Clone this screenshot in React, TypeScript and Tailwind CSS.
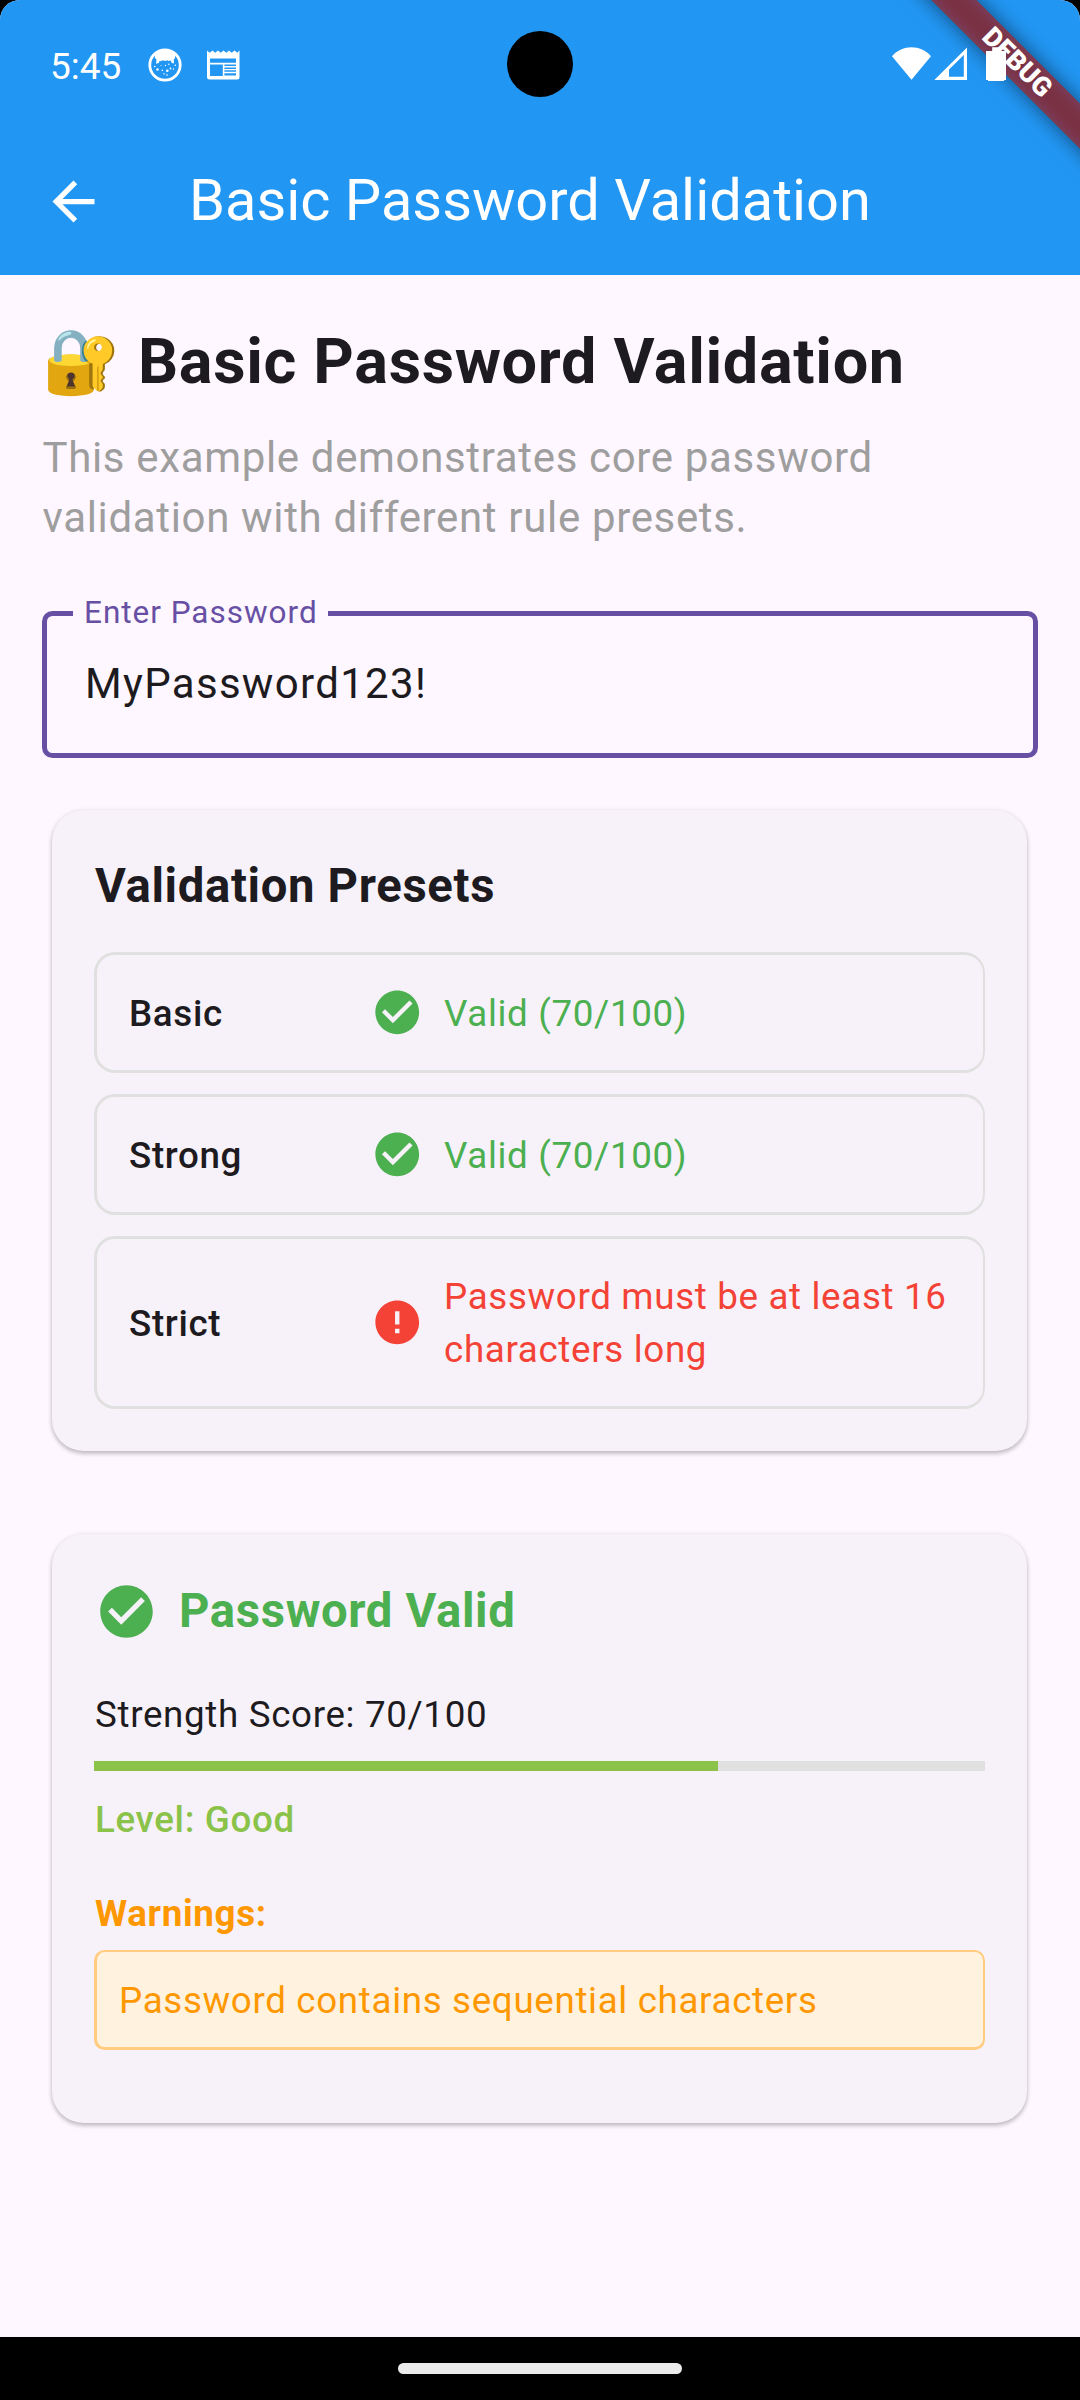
import React from "react";

type Tone = "ok" | "error";

function CheckCircle({ className }: { className: string }) {
  return (
    <svg viewBox="0 0 24 24" className={className} fill="currentColor">
      <path d="M12 2C6.48 2 2 6.48 2 12s4.48 10 10 10 10-4.48 10-10S17.52 2 12 2zm-2 15l-5-5 1.41-1.41L10 14.17l7.59-7.59L19 8l-9 9z" />
    </svg>
  );
}

function ErrorCircle({ className }: { className: string }) {
  return (
    <svg viewBox="0 0 24 24" className={className} fill="currentColor">
      <path d="M12 2C6.48 2 2 6.48 2 12s4.48 10 10 10 10-4.48 10-10S17.52 2 12 2zm1 15h-2v-2h2v2zm0-4h-2V7h2v6z" />
    </svg>
  );
}

function CatIcon() {
  return (
    <svg viewBox="0 0 34 34" className="h-[34px] w-[34px]">
      <circle cx="17" cy="17" r="15.2" fill="none" stroke="#fff" strokeWidth="2.8" />
      <path d="M6.500 6C10 1.500 24 1.500 27.500 6L27 10L25.800 11.500L26 15.500L23.500 14.800L22.800 12.600L20.500 12.900L19.500 12.300C18 13 16 13 14.500 12.300L13 13.200L11.500 12.900L10.800 15L8 15.700L8.500 11.500L7 10Z" fill="#fff" />
      <g fill="#fff">
        <circle cx="17.5" cy="17.5" r="0.7" />
        <circle cx="9.5" cy="21.5" r="1.2" />
        <circle cx="19.3" cy="22.8" r="1.3" />
        <circle cx="14.3" cy="22.2" r="0.8" />
        <circle cx="22.5" cy="20.5" r="0.9" />
        <circle cx="25.5" cy="21" r="0.7" />
        <circle cx="6.8" cy="18.5" r="0.8" />
        <circle cx="16" cy="25.7" r="0.7" />
        <circle cx="19" cy="27" r="0.8" />
        <circle cx="27.3" cy="17.3" r="0.8" />
        <circle cx="20.8" cy="16.3" r="0.7" />
        <circle cx="13" cy="17.5" r="0.5" />
      </g>
    </svg>
  );
}

function NewsIcon() {
  return (
    <svg viewBox="0 0 34 30" className="h-[30px] w-[34px]">
      <path
        fillRule="evenodd"
        fill="#fff"
        d="M1 0.500L3.700 2.800L6.500 0.500L9.200 2.800L12 0.500L14.700 2.800L17.500 0.500L20.200 2.800L23 0.500L25.700 2.800L28.500 0.500L31.200 2.800L33.500 0.500V27A2.500 2.500 0 0 1 31 29.500H3.500A2.500 2.500 0 0 1 1 27ZM4 8.500V12.800H30V8.500ZM4 14.600V26H16.800V14.600ZM18.400 14.600V16H30V14.600ZM18.400 17.500V18.900H30V17.500ZM18.400 20.300V21.700H30V20.300ZM18.400 23.200V25.600H30V23.200Z"
      />
    </svg>
  );
}

function StatusBar() {
  return (
    <div className="relative z-20 flex h-[128px] items-start text-white">
      <span className="ml-[50px] mt-[45px] w-[98px] text-[37px] leading-[43px]">5:45</span>
      <div className="mt-[48px]">
        <CatIcon />
      </div>
      <div className="ml-[24px] mt-[50px]">
        <NewsIcon />
      </div>
      <svg viewBox="0 0 116 36" className="ml-auto mr-[72px] mt-[46px] h-[36px] w-[116px]" fill="#fff">
        <path d="M0 10.200C10.500 -1.700 28.500 -1.700 39 10.200L19.500 33.700Z" />
        <path fillRule="evenodd" d="M42.300 34L75 1.600V34ZM57 30.700H71.800V9L57 23.600Z" />
        <path d="M100.200 1.200H108V5H114V34H112.200V35H96V34H94V5H100.200Z" />
      </svg>
      <div className="absolute left-[507px] top-[31px] h-[66px] w-[66px] rounded-full bg-black" />
    </div>
  );
}

function DebugRibbon() {
  return (
    <div className="pointer-events-none absolute right-0 top-0 z-10 h-[200px] w-[200px] overflow-hidden">
      <div className="absolute left-[-13px] top-[47px] h-[31.5px] w-[300px] rotate-45 bg-black/50 blur-[10px]" />
      <div className="absolute left-[-13px] top-[47px] flex h-[31.5px] w-[300px] rotate-45 items-center justify-center bg-[#b71c1ca0] text-[26.8px] font-black leading-none text-white">
        DEBUG
      </div>
    </div>
  );
}

function AppBar() {
  return (
    <div className="flex h-[147px] items-center text-white">
      <svg viewBox="0 0 24 24" className="ml-[42px] h-[63px] w-[63px]" fill="currentColor">
        <path d="M20 11H7.830l5.590-5.590L12 4l-8 8 8 8 1.410-1.410L7.830 13H20v-2z" />
      </svg>
      <h1 className="mb-[2px] ml-[84px] text-[57.75px] leading-none">Basic Password Validation</h1>
    </div>
  );
}

function PresetRow({ name, tone, message }: { name: string; tone: Tone; message: string }) {
  const ok = tone === "ok";
  return (
    <div className="flex min-h-[121px] items-center rounded-[21px] border-[3px] border-r-2 border-[#e0e0e0] px-[32px] py-[30.5px] text-[36.75px] leading-[53px] tracking-[0.656px]">
      <span className="w-[241.5px] shrink-0 translate-y-px font-medium">{name}</span>
      <div className={ok ? "flex flex-1 items-center gap-[21px] text-[#4caf50]" : "flex flex-1 items-center gap-[21px] text-[#f44336]"}>
        {ok ? <CheckCircle className="size-[52.5px] shrink-0" /> : <ErrorCircle className="size-[52.5px] shrink-0" />}
        <span className={ok ? "translate-y-px" : ""}>{message}</span>
      </div>
    </div>
  );
}

function Card({ className, children }: { className: string; children: React.ReactNode }) {
  return (
    <section
      className={`ml-[10px] mr-[11px] rounded-[31.5px] bg-[#f7f2fa] p-[42px] shadow-[0_3px_4px_rgba(0,0,0,0.17),0_1px_5px_rgba(0,0,0,0.14)] ${className}`}
    >
      {children}
    </section>
  );
}

const presets: { name: string; tone: Tone; message: string }[] = [
  { name: "Basic", tone: "ok", message: "Valid (70/100)" },
  { name: "Strong", tone: "ok", message: "Valid (70/100)" },
  { name: "Strict", tone: "error", message: "Password must be at least 16 characters long" },
];

export default function App() {
  const score = 70;
  return (
    <div className="h-[2400px] w-[1080px] overflow-hidden bg-black font-[Roboto,sans-serif] text-[#1d1b20]">
      <div className="relative flex h-[2337px] flex-col overflow-hidden rounded-t-[20px] bg-[#fef7ff]">
        <header className="h-[275px] bg-[#2196f3]">
          <StatusBar />
          <AppBar />
        </header>
        <DebugRibbon />

        <main className="px-[42px] pt-[42px]">
          <h2 className="flex items-center text-[63px] font-bold leading-[90px] tracking-[0.656px]">
            <span className="w-[96px] shrink-0">🔐</span>
            <span>Basic Password Validation</span>
          </h2>
          <p className="mt-[21px] pl-[0.5px] text-[42px] leading-[60px] tracking-[0.656px] text-[#9e9e9e]">
            This example demonstrates core password validation with different rule presets.
          </p>

          <div className="relative mt-[63px] flex h-[147px] items-center rounded-[10.5px] border-[5px] border-[#6750a4] pb-[2px] pl-[38px]">
            <span className="absolute left-[26px] top-[-23px] w-[255px] bg-[#fef7ff] pl-[11px] text-[31.5px] leading-[40px] tracking-[0.98px] text-[#6750a4]">
              Enter Password
            </span>
            <span className="text-[42px] leading-[63px] tracking-[1.31px]">MyPassword123!</span>
          </div>

          <Card className="mt-[52px] h-[641px]">
            <h3 className="mb-[32px] pl-px text-[47.25px] font-bold leading-[68px] tracking-[0.656px]">Validation Presets</h3>
            <div className="flex flex-col gap-[21px]">
              {presets.map((p) => (
                <PresetRow key={p.name} {...p} />
              ))}
            </div>
          </Card>

          <Card className="mt-[83px] h-[589px] text-[36.75px] leading-[53px] tracking-[0.656px]">
            <div className="flex translate-y-px items-center gap-[21px] pl-px text-[#4caf50]">
              <CheckCircle className="size-[63px]" />
              <h3 className="text-[47.25px] font-bold leading-[69px]">Password Valid</h3>
            </div>
            <p className="mt-[42px] translate-y-px pl-px">Strength Score: {score}/100</p>
            <div className="mt-[21px] h-[10px] bg-[#e0e0e0]">
              <div className="h-full bg-[#8bc34a]" style={{ width: `${score}%` }} />
            </div>
            <p className="mt-[21px] translate-y-px pl-px font-medium text-[#8bc34a]">Level: Good</p>
            <p className="mt-[42px] pl-px font-bold text-[#ff9800]">Warnings:</p>
            <div className="mt-[10px] rounded-[10.5px] border-2 border-b-[3px] border-l-[3px] border-[#ffcc80] bg-[#fff3e0] px-[22px] pb-[20.5px] pt-[21.5px] text-[#ff9800]">
              Password contains sequential characters
            </div>
          </Card>
        </main>
      </div>
      <div className="flex h-[63px] items-center justify-center bg-black">
        <div className="h-[11px] w-[284px] rounded-full bg-[#ebebeb]" />
      </div>
    </div>
  );
}
